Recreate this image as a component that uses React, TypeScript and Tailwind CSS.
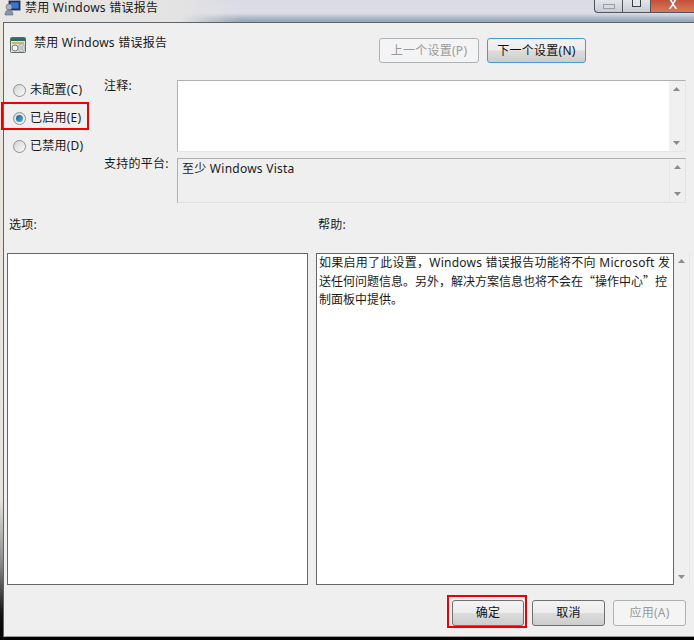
const font = "font-['Noto_Sans','Noto_Sans_CJK_SC',sans-serif] text-[12px] leading-[16px] tracking-[0.25px] text-[#1a1a1a]";
const btnFace = "bg-[linear-gradient(to_bottom,#f3f3f3_0%,#ececec_48%,#dcdcdc_52%,#cdcdcd_100%)]";

function GpIcon({ className }: { className: string }) {
  return (
    <svg viewBox="0 0 16 16" className={className}>
      <rect x="0.5" y="0.5" width="15" height="15" rx="1" fill="#dfe5dc" stroke="#5f6b62" />
      <rect x="1" y="1" width="14" height="3" fill="#2f6a63" />
      <rect x="2" y="5" width="12" height="2" fill="#c9b765" />
      <circle cx="5" cy="11" r="3" fill="#f4f4ee" stroke="#7a7a72" />
      <rect x="9" y="8" width="5" height="6" fill="#fbfbf6" stroke="#7d8a90" strokeWidth="0.7" />
      <path d="M10 10h3M10 12h3" stroke="#52616b" strokeWidth="0.7" />
    </svg>
  );
}

function UserIcon() {
  return (
    <svg viewBox="0 0 17 17" className="h-[17px] w-[17px]">
      <rect x="5" y="1" width="11" height="9" fill="#1f3d7a" stroke="#16244a" strokeWidth="0.8" />
      <rect x="6.5" y="2.5" width="8" height="6" fill="#3f73c8" />
      <circle cx="5" cy="7" r="3" fill="#a9b3c0" stroke="#5d6876" strokeWidth="0.6" />
      <path d="M1 15c0-4 2-5 4-5s4 1 4 5z" fill="#8496ad" stroke="#5d6876" strokeWidth="0.6" />
    </svg>
  );
}

function Arrow({ up }: { up?: boolean }) {
  return (
    <svg viewBox="0 0 7 4" className="h-[4px] w-[7px]">
      <path d={up ? "M3.5 0L7 4H0z" : "M0 0h7L3.5 4z"} fill="#8c8c8c" />
    </svg>
  );
}

function ScrollBar({ tint }: { tint: string }) {
  return (
    <div className={`flex w-[16px] shrink-0 flex-col justify-between py-[6px] pl-[4px] ${tint}`}>
      <Arrow up />
      <Arrow />
    </div>
  );
}

function Radio({ label, checked }: { label: string; checked?: boolean }) {
  return (
    <div className="flex h-[20px] items-center gap-[4px]">
      <span className="flex h-[13px] w-[13px] items-center justify-center rounded-full border border-[#8e8f8f] bg-gradient-to-br from-[#d4d4d4] to-[#fbfbfb]">
        {checked && <span className="h-[7px] w-[7px] rounded-full bg-gradient-to-br from-[#1a5f8e] to-[#4fb3e0]" />}
      </span>
      <span>{label}</span>
    </div>
  );
}

function Button({ label, disabled, focused }: { label: string; disabled?: boolean; focused?: boolean }) {
  let look = `border-[#707070] ${btnFace} text-[#111]`;
  if (disabled) look = "border-[#adb2b5] bg-[#f4f4f4] text-[#9a9a9a]";
  if (focused) look = `border-[#3c9fd8] ${btnFace} text-[#111]`;
  return (
    <div className={`flex h-full w-full items-center justify-center rounded-[3px] border ${look}`}>{label}</div>
  );
}

export default function App() {
  return (
    <div className={`flex h-[640px] w-[694px] flex-col overflow-hidden bg-[linear-gradient(to_bottom,#ece8e0_0%,#e6e3dc_78%,#8a8a8a_88%,#111_96%,#000_100%)] ${font}`}>
      {/* glass title bar */}
      <div className="flex h-[22px] shrink-0 items-start justify-between bg-[linear-gradient(to_right,#e8e6e2_0px,#e4e3e3_180px,transparent_240px),linear-gradient(to_bottom,#d9dae5_0%,#dcdde6_60%,#a9b5c3_85%,#8fa3b8_100%)] pl-[4px]">
        <div className="flex items-start gap-[4px]">
          <UserIcon />
          <span className="leading-[15px]">禁用 Windows 错误报告</span>
        </div>
        <div className="flex h-[13px] w-[100px] overflow-hidden rounded-bl-[4px] border-b border-l border-[#50545c] bg-gradient-to-b from-[#e4e6ea] to-[#c8cbd0]">
          <div className="flex w-[28px] items-center justify-center border-r border-[#50545c]">
            <span className="h-[5px] w-[12px] border border-[#9a9ea6] bg-[#d8dade]" />
          </div>
          <div className="flex w-[28px] items-start justify-center border-r border-[#50545c]">
            <span className="h-[7px] w-[9px] border border-t-0 border-[#3c4046] bg-[#e4e6ea]" />
          </div>
          <div className="flex flex-1 items-start justify-center bg-gradient-to-b from-[#c4503c] to-[#d97a58]">
            <svg viewBox="0 0 12 9" className="h-[9px] w-[12px]">
              <path d="M1 -2L5 4L1 9H4L6 6L8 9H11L7 4L11 -2H8L6 2L4 -2z" fill="#fff" stroke="#7a3a30" strokeWidth="0.4" />
            </svg>
          </div>
        </div>
      </div>

      {/* client area */}
      <div className="mb-[3px] ml-[3px] flex flex-1 flex-col border-b border-l border-t border-[#5f6468] border-b-[#9a9a9a] bg-[#efefef]">
        {/* header */}
        <div className="flex h-[57px] shrink-0 pl-[6px] pr-[108px] pt-[14px]">
          <GpIcon className="h-[16px] w-[16px]" />
          <span className="ml-[8px] -mt-[1px] leading-[14px]">禁用 Windows 错误报告</span>
          <div className="ml-auto mt-[1px] flex h-[25px] gap-[8px]">
            <div className="h-[25px] w-[100px]"><Button label="上一个设置(P)" disabled /></div>
            <div className="h-[25px] w-[99px]"><Button label="下一个设置(N)" focused /></div>
          </div>
        </div>

        {/* setting + comment + platform */}
        <div className="flex h-[125px] shrink-0">
          <div className="flex w-[100px] shrink-0 flex-col">
            <div className="pl-[9px]"><Radio label="未配置(C)" /></div>
            <div className="-ml-[3px] mt-[2px] h-[28px] w-[88px] border-2 border-[#f00000] pl-[10px] pt-[4px]"><Radio label="已启用(E)" checked /></div>
            <div className="mt-[6px] pl-[9px]"><Radio label="已禁用(D)" /></div>
          </div>
          <div className="flex flex-1 flex-col gap-[6px]">
            <div className="flex">
              <span className="-mt-[2px] w-[73px] shrink-0">注释:</span>
              <div className="flex h-[72px] w-[509px] border border-[#b0b0b0] border-b-[#e6e6e6] border-r-[#e6e6e6] bg-white">
                <div className="flex-1" />
                <ScrollBar tint="bg-[#f0f0f0]" />
              </div>
            </div>
            <div className="flex">
              <span className="-mt-[2px] w-[73px] shrink-0">支持的平台:</span>
              <div className="flex h-[45px] w-[509px] border border-[#b0b0b0] border-b-[#e0e0e0] border-r-[#e0e0e0]">
                <div className="flex-1 pl-[4px] pt-[2px]">至少 Windows Vista</div>
                <ScrollBar tint="border-l border-[#e6e6e6]" />
              </div>
            </div>
          </div>
        </div>

        {/* labels */}
        <div className="flex h-[48px] shrink-0 pl-[5px] pt-[12px]">
          <span className="w-[309px]">选项:</span>
          <span>帮助:</span>
        </div>

        {/* options + help */}
        <div className="flex h-[332px] shrink-0 pl-[3px]">
          <div className="w-[301px] shrink-0 border border-[#666] bg-white" />
          <div className="ml-[8px] w-[358px] shrink-0 border border-[#666] bg-white pl-[2px] leading-[18px]">
            <div className="whitespace-nowrap">如果启用了此设置，Windows 错误报告功能将不向 Microsoft 发</div>
            <div className="whitespace-nowrap tracking-normal">送任何问题信息。另外，解决方案信息也将不会在<span className="font-['Noto_Sans_CJK_SC',sans-serif]">“操作中心”</span>控</div>
            <div className="tracking-normal">制面板中提供。</div>
          </div>
          <ScrollBar tint="border-r border-[#e6e6e6]" />
        </div>

        {/* footer buttons */}
        <div className="flex flex-1 items-start justify-end pr-[8px] pt-[10px]">
          <div className="h-[33px] w-[80px] border-2 border-[#f00000] pb-0 pl-[3px] pr-[1px] pt-[3px]">
            <Button label="确定" />
          </div>
          <div className="ml-[5px] mt-[5px] h-[26px] w-[73px]"><Button label="取消" /></div>
          <div className="ml-[8px] mt-[5px] h-[26px] w-[73px]"><Button label="应用(A)" disabled /></div>
        </div>
      </div>
    </div>
  );
}
